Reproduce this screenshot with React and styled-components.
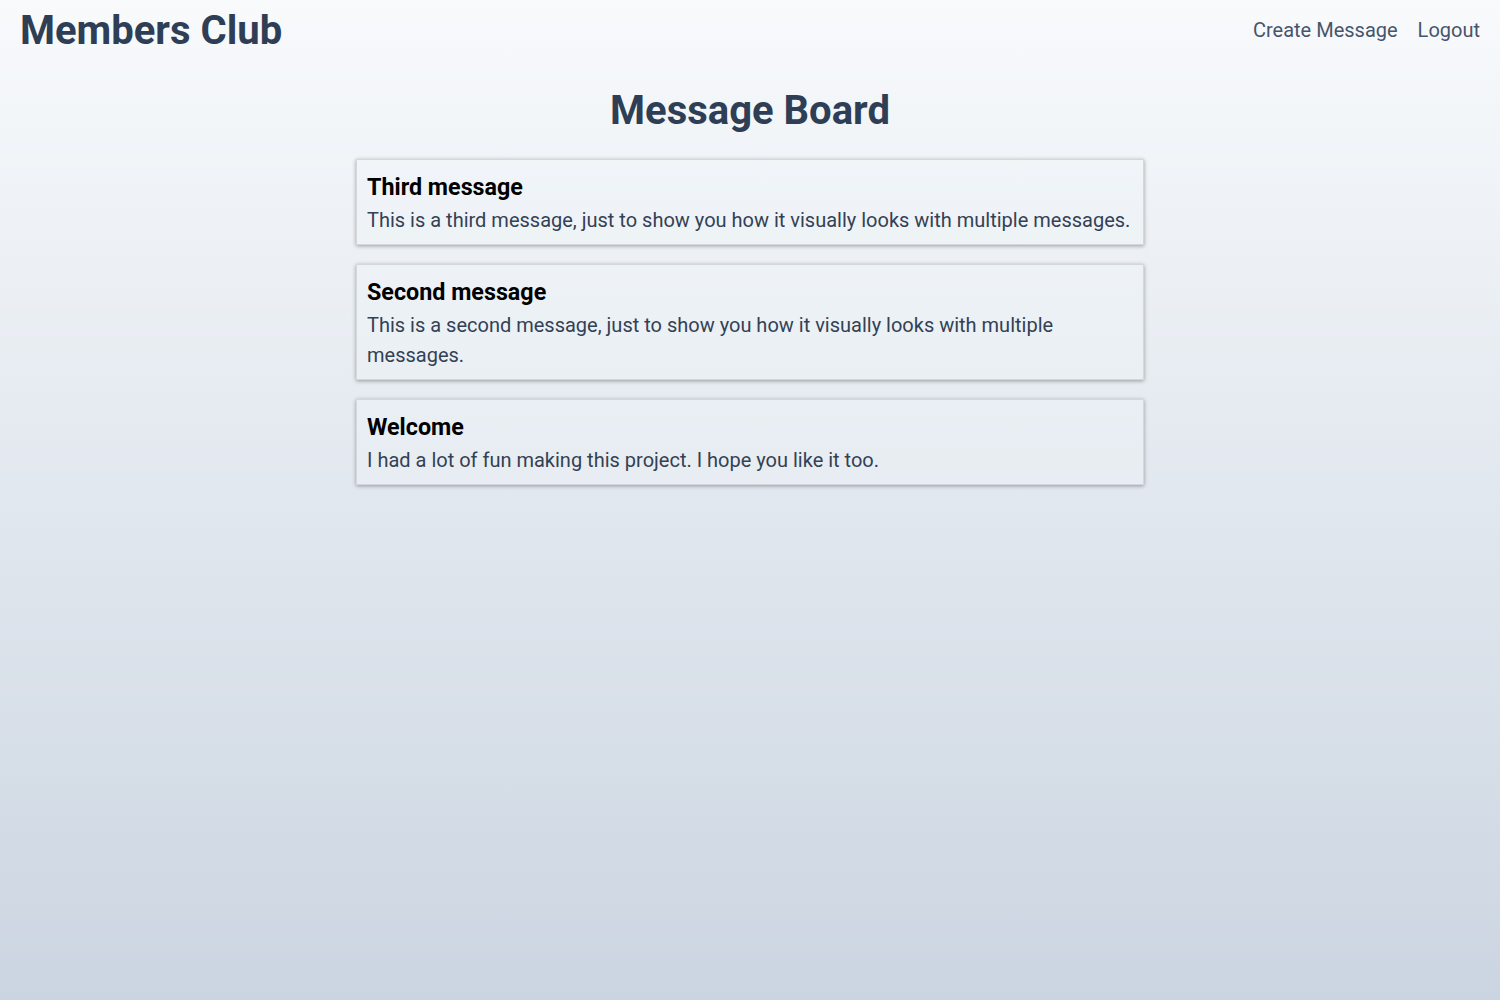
import React from "react";
import styled, { createGlobalStyle } from "styled-components";

const Global = createGlobalStyle`
  html, body { margin: 0; padding: 0; }
  body {
    font-family: Roboto, "Noto Sans", sans-serif;
    min-height: 100vh;
    background: linear-gradient(to bottom, #f8fafc, #cbd5e1);
    color: #334155;
  }
`;

const Page = styled.div`
  min-height: 100vh;
  display: flex;
  flex-direction: column;
`;

const Header = styled.header`
  display: flex;
  justify-content: space-between;
  align-items: center;
  height: 60px;
  padding: 0 20px;
`;

const Logo = styled.div`
  font-size: 40px;
  font-weight: 700;
  color: #2e3e55;
  line-height: 1;
  margin-top: 1px;
`;

const Nav = styled.nav`
  display: flex;
  gap: 20px;
`;

const NavLink = styled.a`
  font-size: 20px;
  color: #475569;
  text-decoration: none;
  cursor: pointer;
`;

const Main = styled.main`
  display: flex;
  flex-direction: column;
  align-items: center;
`;

const Title = styled.h1`
  font-size: 40px;
  font-weight: 700;
  color: #2e3e55;
  line-height: 48px;
  margin: 27px 0 24px;
`;

const List = styled.div`
  width: 788px;
  display: flex;
  flex-direction: column;
  gap: 19px;
`;

const Card = styled.article`
  border: 1px solid #d4d8de;
  box-shadow: 0 1px 4px rgba(0, 0, 0, 0.35);
  padding: 9px 10px;
  background: rgba(241, 245, 249, 0.35);
`;

const CardTitle = styled.h2`
  margin: 0;
  font-size: 23.3px;
  font-weight: 700;
  color: #000;
  line-height: 36px;
`;

const CardBody = styled.p`
  margin: 0;
  font-size: 20px;
  line-height: 30px;
  color: #334155;
`;

const messages = [
  {
    title: "Third message",
    body: "This is a third message, just to show you how it visually looks with multiple messages.",
  },
  {
    title: "Second message",
    body: "This is a second message, just to show you how it visually looks with multiple messages.",
  },
  {
    title: "Welcome",
    body: "I had a lot of fun making this project. I hope you like it too.",
  },
];

export default function App() {
  return (
    <Page>
      <Global />
      <Header>
        <Logo>Members Club</Logo>
        <Nav>
          <NavLink>Create Message</NavLink>
          <NavLink>Logout</NavLink>
        </Nav>
      </Header>
      <Main>
        <Title>Message Board</Title>
        <List>
          {messages.map((m) => (
            <Card key={m.title}>
              <CardTitle>{m.title}</CardTitle>
              <CardBody>{m.body}</CardBody>
            </Card>
          ))}
        </List>
      </Main>
    </Page>
  );
}
